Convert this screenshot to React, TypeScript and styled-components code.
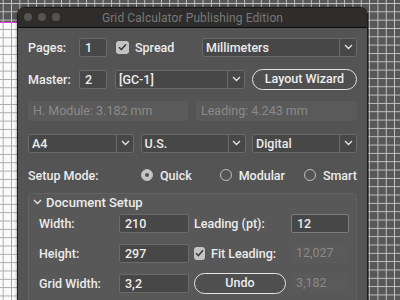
import styled, { createGlobalStyle, css } from "styled-components"

const GlobalStyle = createGlobalStyle`
  html, body {
    margin: 0;
    padding: 0;
    background: #585858;
  }
  body {
    font-family: Roboto, "Liberation Sans", sans-serif;
    -webkit-font-smoothing: antialiased;
  }
`

const gridLines = (color: string) => css`
  background-image: linear-gradient(to right, ${color} 1px, transparent 1px),
    linear-gradient(to bottom, ${color} 1px, transparent 1px);
  background-size: 8.33px 8.33px;
`

const Chevron = () => (
  <svg width="9" height="6" viewBox="0 0 9 6">
    <path d="M1 1l3.5 3.5L8 1" fill="none" stroke="#e6e6e6" strokeWidth="1.3" />
  </svg>
)

const Check = () => (
  <svg width="9" height="8" viewBox="0 0 9 8">
    <path d="M1 4.2l2.4 2.4L8 1.2" fill="none" stroke="#3e3e3e" strokeWidth="1.6" />
  </svg>
)

type SelectProps = { value: string; width: number }
const Select = ({ value, width }: SelectProps) => (
  <SelectBox $width={width}>
    <SelectValue>{value}</SelectValue>
    <SelectArrow>
      <Chevron />
    </SelectArrow>
  </SelectBox>
)

export default function App() {
  return (
    <>
      <GlobalStyle />
      <Canvas>
        <Page />
        <Window>
          <TitleBar>
            <Lights>
              <Light />
              <Light />
              <Light />
            </Lights>
            <Title>Grid Calculator Publishing Edition</Title>
          </TitleBar>

          <Body>
            <Row>
              <Label $width={51}>Pages:</Label>
              <Field $width={28}>1</Field>
              <CheckRow $ml={9}>
                <CheckBox>
                  <Check />
                </CheckBox>
                <Text>Spread</Text>
              </CheckRow>
              <Spacer />
              <Select value="Millimeters" width={155} />
            </Row>

            <Row>
              <Label $width={51}>Master:</Label>
              <Field $width={28}>2</Field>
              <Gap $w={8} />
              <Select value="[GC-1]" width={130} />
              <Spacer />
              <PillButton $width={105}>Layout Wizard</PillButton>
            </Row>

            <Row>
              <Readout $width={160}>H. Module: 3.182 mm</Readout>
              <Spacer />
              <Readout $width={161}>Leading: 4.243 mm</Readout>
            </Row>

            <Row>
              <Select value="A4" width={106} />
              <Spacer />
              <Select value="U.S." width={105} />
              <Spacer />
              <Select value="Digital" width={105} />
            </Row>

            <Row>
              <Label $width={113}>Setup Mode:</Label>
              <Radio $checked />
              <Text $ml={7} $width={64}>Quick</Text>
              <Radio />
              <Text $ml={7} $width={70}>Modular</Text>
              <Radio />
              <Text $ml={7}>Smart</Text>
            </Row>

            <Group>
              <GroupHeader>
                <Chevron />
                <span>Document Setup</span>
              </GroupHeader>
              <GroupRow>
                <Label $width={80}>Width:</Label>
                <Field $width={70}>210</Field>
                <Label $width={97} $ml={5}>Leading (pt):</Label>
                <Field $width={58} $bright>12</Field>
              </GroupRow>
              <GroupRow>
                <Label $width={80}>Height:</Label>
                <Field $width={70}>297</Field>
                <CheckRow $ml={5} $width={97}>
                  <CheckBox $small>
                    <Check />
                  </CheckBox>
                  <Text>Fit Leading:</Text>
                </CheckRow>
                <Readout $width={58}>12,027</Readout>
              </GroupRow>
              <GroupRow>
                <Label $width={80}>Grid Width:</Label>
                <Field $width={70}>3,2</Field>
                <PillButton $width={92} $ml={5}>Undo</PillButton>
                <Gap $w={5} />
                <Readout $width={58}>3,182</Readout>
              </GroupRow>
            </Group>
          </Body>
        </Window>
      </Canvas>
    </>
  )
}

const Canvas = styled.div`
  position: relative;
  width: 400px;
  height: 300px;
  overflow: hidden;
  box-sizing: border-box;
  padding: 7px 0 0 17px;
  background-color: #585858;
  ${gridLines("#c6c6c6")}
  background-position: 2.7px 3px;
`

const Page = styled.div`
  position: absolute;
  left: 0;
  top: 22px;
  width: 17px;
  bottom: 0;
  background-color: #fafafa;
  ${gridLines("#a8a8a8")}
  background-position: 2.7px 6px;
  border-top: 1px solid #e23fe0;
`

const Window = styled.div`
  position: relative;
  width: 351px;
  height: 310px;
  box-sizing: border-box;
  border: 1px solid #1c1c1c;
  border-radius: 8px 8px 0 0;
  background: #545454;
  overflow: hidden;
  box-shadow: 0 0 3px rgba(0, 0, 0, 0.5);
`

const TitleBar = styled.div`
  position: relative;
  display: flex;
  align-items: center;
  justify-content: center;
  height: 19px;
  background: #2e2d2b;
  border-bottom: 1px solid #0c0c0c;
`

const Lights = styled.div`
  position: absolute;
  left: 6px;
  top: 5px;
  display: flex;
  gap: 6px;
`

const Light = styled.span`
  width: 8px;
  height: 8px;
  border-radius: 50%;
  background: #555452;
`

const Title = styled.div`
  font-size: 12px;
  color: #787878;
  letter-spacing: 0.1px;
`

const Body = styled.div`
  display: flex;
  flex-direction: column;
  gap: 10px;
  padding: 8px 10px 0 10px;
`

const Row = styled.div`
  display: flex;
  align-items: center;
  height: 22px;
`

const Spacer = styled.div`
  flex: 1;
`

const Gap = styled.div<{ $w: number }>`
  width: ${({ $w }) => $w}px;
  flex: none;
`

const textStyles = css`
  font-size: 12.5px;
  font-weight: 500;
  color: #ececec;
  white-space: nowrap;
`

const Label = styled.div<{ $width: number; $ml?: number }>`
  ${textStyles}
  flex: none;
  width: ${({ $width }) => $width}px;
  margin-left: ${({ $ml }) => $ml ?? 0}px;
`

const Text = styled.span<{ $ml?: number; $width?: number }>`
  ${textStyles}
  margin-left: ${({ $ml }) => $ml ?? 0}px;
  ${({ $width }) => $width && `width: ${$width}px;`}
`

const Field = styled.div<{ $width: number; $bright?: boolean }>`
  ${textStyles}
  flex: none;
  box-sizing: border-box;
  width: ${({ $width }) => $width}px;
  height: 19px;
  line-height: 17px;
  padding: 0 5px;
  border: 1px solid ${({ $bright }) => ($bright ? "#7c7c7c" : "#6a6a6a")};
  border-radius: 2px;
  background: #474747;
`

const Readout = styled.div<{ $width: number }>`
  ${textStyles}
  flex: none;
  box-sizing: border-box;
  width: ${({ $width }) => $width}px;
  height: 20px;
  line-height: 20px;
  padding: 0 5px;
  border-radius: 2px;
  background: #5a5a5a;
  color: #8a8a8a;
  font-weight: 400;
`

const CheckRow = styled.div<{ $ml?: number; $width?: number }>`
  display: flex;
  align-items: center;
  gap: 6px;
  flex: none;
  margin-left: ${({ $ml }) => $ml ?? 0}px;
  ${({ $width }) => $width && `width: ${$width}px;`}
`

const CheckBox = styled.span<{ $small?: boolean }>`
  display: flex;
  align-items: center;
  justify-content: center;
  width: ${({ $small }) => ($small ? 11 : 13)}px;
  height: 13px;
  border-radius: 3px;
  background: #c4c4c4;
`

const SelectBox = styled.div<{ $width: number }>`
  display: flex;
  flex: none;
  box-sizing: border-box;
  width: ${({ $width }) => $width}px;
  height: 19px;
  border: 1px solid #6a6a6a;
  border-radius: 3px;
  background: #474747;
`

const SelectValue = styled.div`
  ${textStyles}
  flex: 1;
  line-height: 17px;
  padding-left: 3px;
  overflow: hidden;
`

const SelectArrow = styled.div`
  display: flex;
  align-items: center;
  justify-content: center;
  width: 16px;
  border-left: 1px solid #6a6a6a;
`

const PillButton = styled.div<{ $width: number; $ml?: number }>`
  ${textStyles}
  flex: none;
  box-sizing: border-box;
  width: ${({ $width }) => $width}px;
  height: 21px;
  margin-left: ${({ $ml }) => $ml ?? 0}px;
  border: 1.5px solid #e4e4e4;
  border-radius: 11px;
  background: #4f4f4f;
  text-align: center;
  line-height: 18px;
`

const Radio = styled.span<{ $checked?: boolean }>`
  position: relative;
  flex: none;
  box-sizing: border-box;
  width: 12px;
  height: 12px;
  border-radius: 50%;
  border: 1.3px solid #bdbdbd;
  background: ${({ $checked }) => ($checked ? "#c6c6c6" : "transparent")};
  ${({ $checked }) =>
    $checked &&
    css`
      &::after {
        content: "";
        position: absolute;
        left: 2.5px;
        top: 2.5px;
        width: 4.5px;
        height: 4.5px;
        border-radius: 50%;
        background: #555;
      }
    `}
`

const Group = styled.div`
  display: flex;
  flex-direction: column;
  gap: 10px;
  margin-top: -3px;
  padding: 0 0 10px 10px;
  border: 1px solid #626262;
  border-radius: 4px;
  background: #585858;
`

const GroupHeader = styled.div`
  ${textStyles}
  display: flex;
  align-items: center;
  gap: 4px;
  height: 16px;
  margin-left: -6px;
  margin-top: 0px;
  margin-bottom: -7px;
  font-size: 13px;
`

const GroupRow = styled.div`
  display: flex;
  align-items: center;
  height: 20px;
`
